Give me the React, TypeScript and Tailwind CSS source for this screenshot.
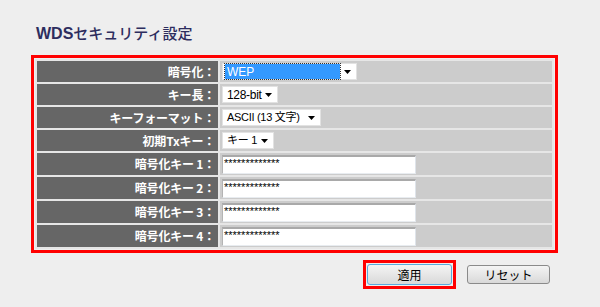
import React from "react";

const jp = { fontFamily: '"Noto Sans CJK JP", "Liberation Sans", sans-serif' };
const sans = { fontFamily: '"Liberation Sans", "Noto Sans CJK JP", sans-serif' };

const Arrow = () => (
  <svg width="7" height="4" viewBox="0 0 7 4" className="shrink-0">
    <path d="M0 0h7L3.5 4z" fill="#000" />
  </svg>
);

const Select = ({ label, width, size = "text-[12px]" }: { label: string; width: string; size?: string }) => (
  <div className={`flex h-[17px] items-center justify-between bg-white border border-[#e2e2e2] pl-[4px] pr-[5px] ${width}`}>
    <span className={`${size} leading-none tracking-[-0.3px] text-black whitespace-nowrap`} style={sans}>{label}</span>
    <Arrow />
  </div>
);

const KeyInput = () => (
  <div className="h-[19px] w-[194px] bg-white border-t-2 border-t-[#a9a9a9] border-l border-l-[#b4b4b4] border-r border-r-[#dfe4ea] border-b border-b-[#e8ecf0] pl-[1px] pt-[1px]">
    <span className="block text-[11px] leading-[11px] text-black" style={sans}>*************</span>
  </div>
);

const rows: { label: string; h: string; field: React.ReactNode }[] = [
  {
    label: "暗号化：",
    h: "h-[21px]",
    field: (
      <div className="flex h-[17px] w-[135px] items-center justify-between bg-white border border-[#e2e2e2] pl-[2px] pr-[5px]">
        <span className="flex h-[15px] w-[115px] items-center bg-[#3399ff] pl-[2px] outline-1 outline-dotted outline-[#333] text-[12px] leading-none text-white" style={sans}>
          WEP
        </span>
        <Arrow />
      </div>
    ),
  },
  { label: "キー長：", h: "h-[21px]", field: <Select label="128-bit" width="w-[56px]" /> },
  { label: "キーフォーマット：", h: "h-[21px]", field: <Select label="ASCII (13 文字)" width="w-[99px]" size="text-[11px]" /> },
  { label: "初期Txキー：", h: "h-[21px]", field: <Select label="キー 1" width="w-[52px]" size="text-[11px]" /> },
  { label: "暗号化キー 1：", h: "h-[22px]", field: <KeyInput /> },
  { label: "暗号化キー 2：", h: "h-[22px]", field: <KeyInput /> },
  { label: "暗号化キー 3：", h: "h-[22px]", field: <KeyInput /> },
  { label: "暗号化キー 4：", h: "h-[22px]", field: <KeyInput /> },
];

export default function App() {
  return (
    <div className="w-[600px] h-[307px] bg-[#eeeeee] overflow-hidden">
      <h1 className="pt-[23px] pl-[36px] text-[15px] leading-[20px] text-[#2d2d5e]">
        <span className="font-bold text-[16px]" style={sans}>WDS</span>
        <span className="font-medium" style={jp}>セキュリティ設定</span>
      </h1>

      <div className="ml-[31px] mt-[11px] w-[527px] border-[3px] border-[#ff0000] p-[1px]">
        <table className="w-full border-separate border-spacing-[2px] bg-[#e6e6e6]">
          <tbody>
            {rows.map((r, i) => (
              <tr key={i}>
                <td
                  className={`w-[181px] p-0 pr-[3px] bg-[#666666] text-right text-white font-bold text-[12px] leading-none tracking-[-0.2px] ${r.h}`}
                  style={jp}
                >
                  {r.label}
                </td>
                <td className={`p-0 pl-[2px] bg-[#cccccc] ${r.h}`}>{r.field}</td>
              </tr>
            ))}
          </tbody>
        </table>
      </div>

      <div className="mt-[7px] flex items-center justify-end gap-[11px] pr-[50px]">
        <div className="border-[3px] border-[#ff0000] p-[1px]">
          <button
            className="block h-[21px] w-[85px] rounded-[3px] border border-[#5aa9dc] bg-gradient-to-b from-[#f4f4f4] to-[#d9d9d9] text-[12px] leading-none text-black"
            style={jp}
          >
            適用
          </button>
        </div>
        <button
          className="block h-[19px] w-[83px] rounded-[3px] border border-[#8a8a8a] bg-gradient-to-b from-[#f4f4f4] to-[#d9d9d9] text-[12px] leading-none text-black"
          style={jp}
        >
          リセット
        </button>
      </div>
    </div>
  );
}
